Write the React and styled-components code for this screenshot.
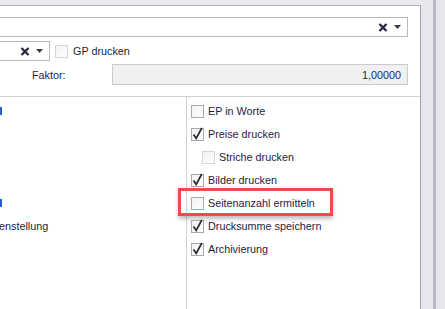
import React from "react";
import styled, { createGlobalStyle } from "styled-components";

const Global = createGlobalStyle`
  html, body { margin: 0; padding: 0; }
  body {
    font-family: "Liberation Sans", Arial, sans-serif;
    font-size: 10.8px;
    color: #1e1e3e;
    background: #e9e9ee;
  }
`;

const Page = styled.div`
  display: flex;
  width: 445px;
  height: 309px;
  overflow: hidden;
  background: #e9e9ee;
`;

const Panel = styled.div`
  flex: 0 0 420px;
  margin-top: 5px;
  display: flex;
  flex-direction: column;
  background: #fff;
  border-top: 1px solid #b3b3bb;
  border-right: 1px solid #a4a4ae;
`;

const Gutter = styled.div`
  flex: ${(p) => (p.grow ? "1" : "0 0 12px")};
  background: #e6e6ec;
`;

const Splitter = styled.div`
  flex: 0 0 3px;
  background: #b9b9c5;
`;

const Form = styled.div`
  display: flex;
  flex-direction: column;
  padding: 11px 0 11px;
  border-bottom: 1px solid #d2d2d6;
`;

const Row = styled.div`
  display: flex;
  align-items: center;
  height: ${(p) => p.h || 20}px;
  margin-top: ${(p) => p.mt || 0}px;
`;

const Combo = styled.div`
  display: flex;
  align-items: center;
  justify-content: flex-end;
  gap: 6px;
  box-sizing: border-box;
  width: ${(p) => p.w}px;
  height: 20px;
  margin-left: -1px;
  padding-right: 6px;
  border: 1px solid #b9b9c2;
  background: #fff;
`;

const Label = styled.span`
  white-space: nowrap;
  padding-left: ${(p) => p.pl || 0}px;
  width: ${(p) => (p.w ? p.w + "px" : "auto")};
  flex: none;
`;

const Input = styled.div`
  box-sizing: border-box;
  width: 296px;
  height: 21px;
  padding: 0 6px;
  display: flex;
  align-items: center;
  justify-content: flex-end;
  border: 1px solid #c9c9cf;
  background: #f0f0f0;
  color: #1e1e52;
`;

const Split = styled.div`
  flex: 1;
  display: flex;
`;

const LeftCol = styled.div`
  flex: 0 0 186px;
  border-right: 1px solid #d2d2d6;
  overflow: hidden;
  display: flex;
  flex-direction: column;
  padding-top: 2px;
`;

const RightCol = styled.div`
  flex: 1;
  display: flex;
  flex-direction: column;
  padding: 2px 0 0 4px;
`;

const Line = styled.div`
  position: relative;
  display: flex;
  align-items: center;
  gap: 4px;
  height: 23px;
  padding-left: ${(p) => (p.indent ? 11 : 0)}px;
  white-space: nowrap;
`;

const Inline = styled(Line)`
  height: 20px;
  margin-left: 5px;
`;

const Stem = styled.span`
  display: block;
  width: 2px;
  height: 8px;
  margin-top: 1px;
  background: #2a5bd0;
`;

const Text = styled.span`
  color: #1e1e3e;
  margin-left: ${(p) => p.ml || 0}px;
  white-space: nowrap;
`;

const Highlight = styled.div`
  position: absolute;
  left: -13px;
  top: -3px;
  width: 155px;
  height: 28px;
  box-sizing: border-box;
  border: 3px solid #f24a4a;
  box-shadow: 0 3px 4px rgba(0, 0, 0, 0.25);
  pointer-events: none;
`;

const ClearIcon = () => (
  <svg width="10" height="9" viewBox="0 0 10 9">
    <path d="M1.5 1 L8.5 8 M8.5 1 L1.5 8" stroke="#23233f" strokeWidth="2.2" />
  </svg>
);

const Arrow = () => (
  <svg width="7" height="4" viewBox="0 0 7 4">
    <path d="M0 0 H7 L3.5 4 Z" fill="#3a3a4e" />
  </svg>
);

const Check = ({ checked, disabled }) => (
  <svg width="13" height="14" viewBox="0 0 13 14" style={{ flex: "none" }}>
    <defs>
      <linearGradient id="cbg" x1="0" y1="0" x2="1" y2="1">
        <stop offset="0" stopColor="#f1f1f3" />
        <stop offset="1" stopColor="#ffffff" />
      </linearGradient>
    </defs>
    <rect
      x="0.5"
      y="1.5"
      width="12"
      height="12"
      fill="url(#cbg)"
      stroke={disabled ? "#d4d4da" : "#a9a9b4"}
    />
    {checked && (
      <path
        d="M2.5 7.5 L5.2 11.3 L10.8 1"
        fill="none"
        stroke="#2a2a36"
        strokeWidth="1.7"
      />
    )}
  </svg>
);

const options = [
  { text: "EP in Worte" },
  { text: "Preise drucken", checked: true },
  { text: "Striche drucken", indent: true, disabled: true },
  { text: "Bilder drucken", checked: true },
  { text: "Seitenanzahl ermitteln", marked: true },
  { text: "Drucksumme speichern", checked: true },
  { text: "Archivierung", checked: true },
];

export default function App() {
  return (
    <Page>
      <Global />
      <Panel>
        <Form>
          <Row>
            <Combo w={409}>
              <ClearIcon />
              <Arrow />
            </Combo>
          </Row>
          <Row mt={4}>
            <Combo w={51}>
              <ClearIcon />
              <Arrow />
            </Combo>
            <Inline>
              <Check disabled />
              <Text ml={1}>GP drucken</Text>
            </Inline>
          </Row>
          <Row h={21} mt={3}>
            <Label pl={32} w={80}>
              Faktor:
            </Label>
            <Input>1,00000</Input>
          </Row>
        </Form>
        <Split>
          <LeftCol>
            <Line>
              <Stem />
            </Line>
            <Line />
            <Line />
            <Line />
            <Line>
              <Stem />
            </Line>
            <Line>
              <Text ml={-1}>enstellung</Text>
            </Line>
          </LeftCol>
          <RightCol>
            {options.map((o) => (
              <Line key={o.text} indent={o.indent}>
                <Check checked={o.checked} disabled={o.disabled} />
                <span>{o.text}</span>
                {o.marked && <Highlight />}
              </Line>
            ))}
          </RightCol>
        </Split>
      </Panel>
      <Gutter />
      <Splitter />
      <Gutter grow />
    </Page>
  );
}
